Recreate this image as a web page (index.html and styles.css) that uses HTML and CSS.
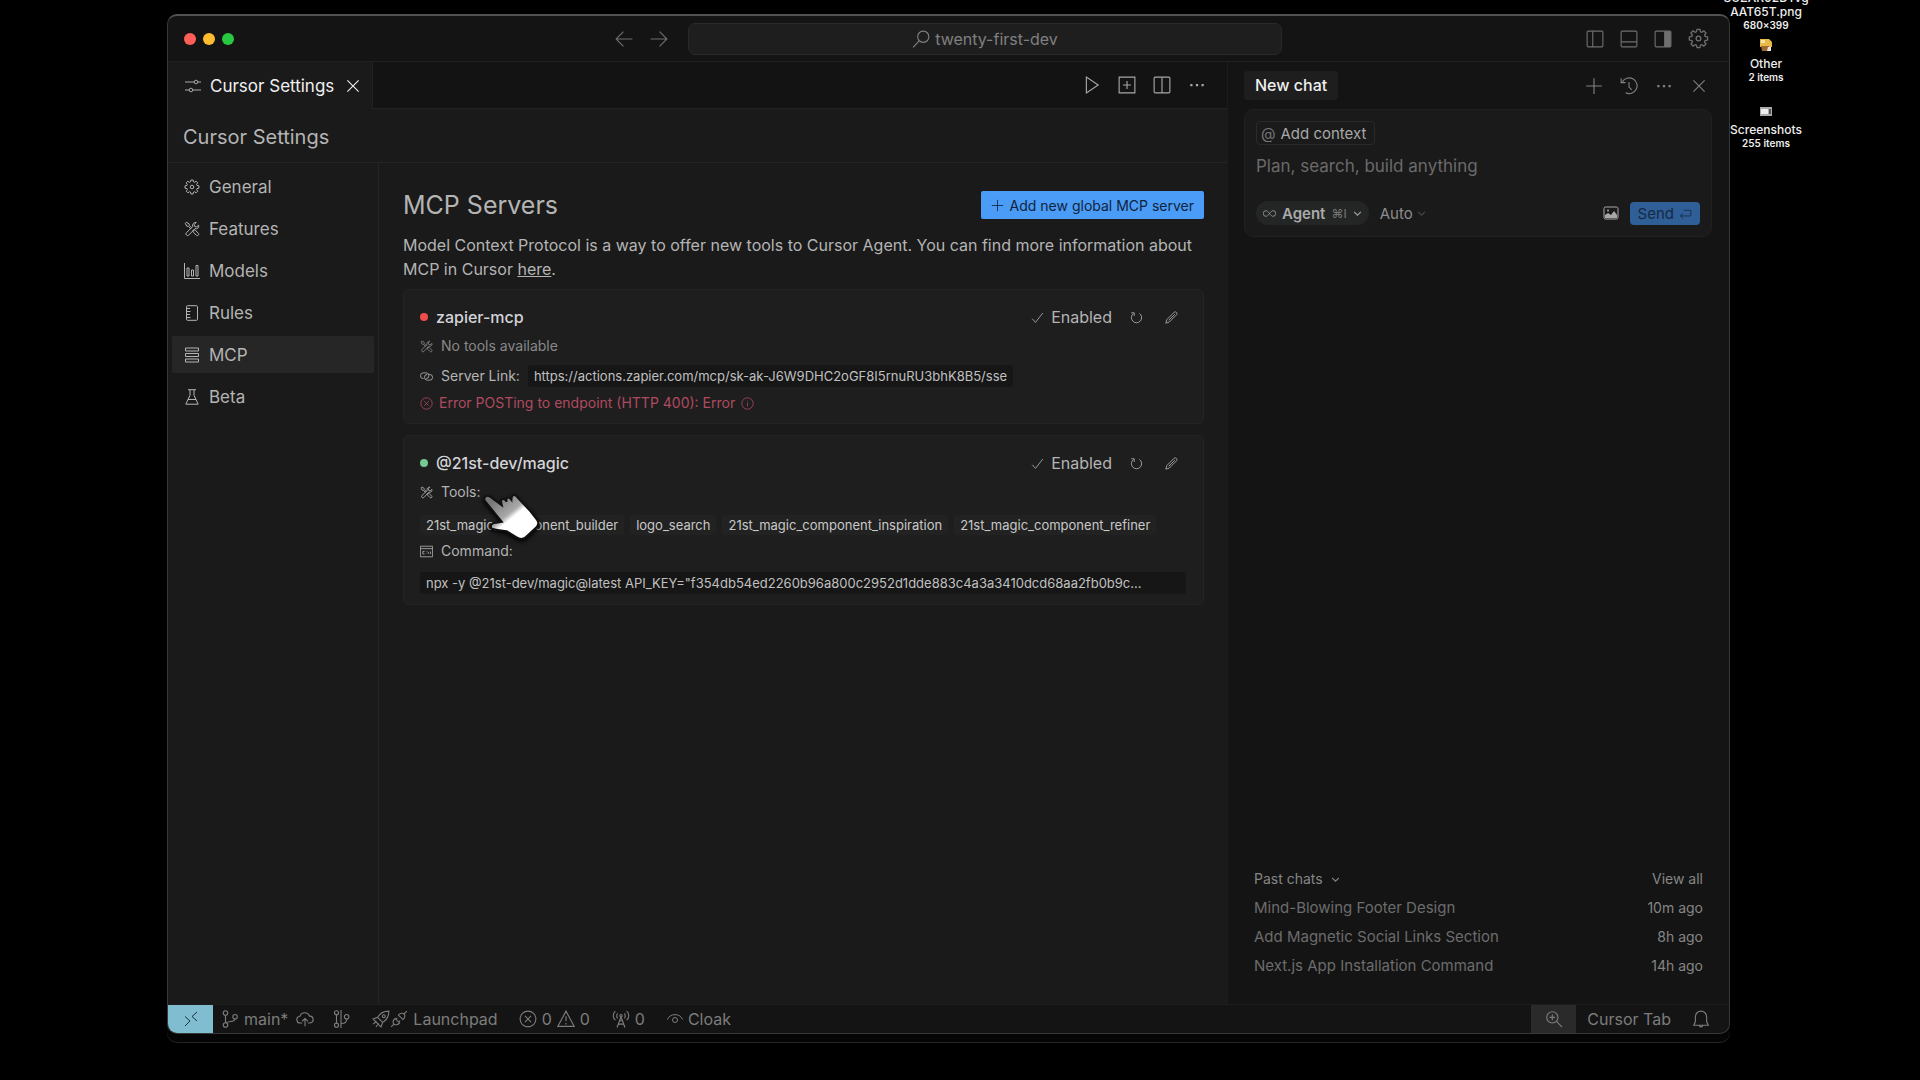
FILE: index.html
```html
<!DOCTYPE html>
<html lang="en">
<head>
    <meta charset="UTF-8">
    <meta name="viewport" content="width=device-width, initial-scale=1.0">
    <title>Cursor Settings - twenty-first-dev</title>
    <link rel="stylesheet" href="styles.css">
</head>
<body>
    <!-- shared icons -->
    <svg class="sprite" aria-hidden="true">
        <symbol id="gear" viewBox="0 0 16 16">
            <path d="M6.9 1h2.2l.4 1.9 1 .4 1.6-1.1 1.6 1.6-1.1 1.6.4 1 1.9.4v2.4l-1.9.4-.4 1 1.1 1.6-1.6 1.6-1.6-1.1-1 .4L9.100 15H6.900l-.4-1.900-1-.4-1.600 1.100-1.600-1.600 1.100-1.600-.4-1L1 9.200V6.800l1.900-.4.4-1-1.100-1.600 1.600-1.600 1.600 1.100 1-.4z"/>
            <circle cx="8" cy="8" r="1.8"/>
        </symbol>
        <symbol id="tools" viewBox="0 0 16 16">
            <path d="M1.300 2.400 2.500 1.200l2.600 1.700.2 1.500 2.300 2.300-1 1-2.300-2.300-1.500-.2zM8.800 9.800l1-1 1.600.5 3 3c1.200 1.200-.8 3.200-2 2l-3-3zM14.700 4.200c.6 2.300-1.600 4.200-3.800 3.500l-6.200 6.500c-1.400 1.400-3.800-.9-2.400-2.400l6.400-6.200C8 3.300 10 1 12.200 1.500l-2 2 .4 1.900 1.900.5z"/>
        </symbol>
        <symbol id="close" viewBox="0 0 16 16"><path d="M3 3l10 10M13 3L3 13"/></symbol>
        <symbol id="plus" viewBox="0 0 16 16"><path d="M8 1v14M1 8h14"/></symbol>
        <symbol id="dots" viewBox="0 0 16 16">
            <path class="solid" d="M2 7h2v2H2zM7 7h2v2H7zM12 7h2v2h-2z"/>
        </symbol>
        <symbol id="check" viewBox="0 0 16 16"><path d="M1.500 9.500 5.500 14 14.500 2.500"/></symbol>
        <symbol id="refresh" viewBox="0 0 16 16">
            <path d="M11.500 2.900a6.300 6.300 0 1 1-7.200.200M1.500 2.200h3.700v3.900"/>
        </symbol>
        <symbol id="pencil" viewBox="0 0 16 16">
            <path d="M1 15l1.200-4.400 9.200-9.200c1.800-1.300 4.300 1 3 3.100l-9.200 9.200zM4.500 11.500l7.500-7.500"/>
        </symbol>
        <symbol id="chevron" viewBox="0 0 16 16"><path d="M2 5l6 6 6-6"/></symbol>
        <symbol id="error" viewBox="0 0 16 16">
            <circle cx="8" cy="8" r="7"/><path d="M5.300 5.300l5.400 5.400M10.700 5.300l-5.400 5.400"/>
        </symbol>
    </svg>

    <div class="window">
        <header class="titlebar">
            <div class="titlebar-left">
                <div class="lights">
                    <span class="light red"></span>
                    <span class="light yellow"></span>
                    <span class="light green"></span>
                </div>
                <div class="history">
                    <button type="button" aria-label="Go back"><svg class="icon" viewBox="0 0 16 16"><path d="M15.500 8H1M7.500 1.500 1 8l6.500 6.500"/></svg></button>
                    <button type="button" aria-label="Go forward"><svg class="icon" viewBox="0 0 16 16"><path d="M.5 8H15M8.500 1.500 15 8l-6.500 6.500"/></svg></button>
                </div>
            </div>
            <button type="button" class="command-center">
                <svg class="icon" viewBox="0 0 16 16"><circle cx="10" cy="6" r="5"/><path d="M6.500 9.500 1 15.500"/></svg>
                twenty-first-dev
            </button>
            <div class="titlebar-right">
                <button type="button" aria-label="Toggle side bar"><svg class="icon" viewBox="0 0 16 16"><rect x="1" y="1" width="14" height="14" rx="1"/><path d="M6 1v14"/></svg></button>
                <button type="button" aria-label="Toggle panel"><svg class="icon" viewBox="0 0 16 16"><rect x="1" y="1" width="14" height="14" rx="1"/><path d="M1 10.500h14"/></svg></button>
                <button type="button" aria-label="Toggle chat"><svg class="icon" viewBox="0 0 16 16"><rect x="1" y="1" width="14" height="14" rx="1"/><path class="solid" d="M9 1h6v14H9z"/></svg></button>
                <button type="button" aria-label="Settings"><svg class="icon large"><use href="#gear"/></svg></button>
            </div>
        </header>

        <div class="workbench">
            <main class="editor">
                <div class="tabs">
                    <div class="tab">
                        <svg class="icon small" viewBox="0 0 16 16"><path d="M0 4h9M13 4h3M0 12h4M8 12h8"/><circle cx="11" cy="4" r="1.800"/><circle cx="6" cy="12" r="1.800"/></svg>
                        <span>Cursor Settings</span>
                        <button type="button" aria-label="Close tab"><svg class="icon"><use href="#close"/></svg></button>
                    </div>
                    <div class="tab-actions">
                        <button type="button" aria-label="Run"><svg class="icon" viewBox="0 0 16 16"><path d="M3 1v14l10.500-7z"/></svg></button>
                        <button type="button" aria-label="New file"><svg class="icon" viewBox="0 0 16 16"><path d="M1 1h14v14H1zM8 4.500v7M4.500 8h7"/></svg></button>
                        <button type="button" aria-label="Split editor"><svg class="icon" viewBox="0 0 16 16"><rect x="1" y="1" width="14" height="14" rx="1"/><path d="M8 1v14"/></svg></button>
                        <button type="button" aria-label="More"><svg class="icon"><use href="#dots"/></svg></button>
                    </div>
                </div>

                <h1 class="page-title">Cursor Settings</h1>

                <div class="settings">
                    <nav class="sidebar">
                        <a href="#general"><svg class="icon small"><use href="#gear"/></svg>General</a>
                        <a href="#features"><svg class="icon small"><use href="#tools"/></svg>Features</a>
                        <a href="#models"><svg class="icon small" viewBox="0 0 16 16"><path d="M.500 0v15.500H16M3 5h2v8H3zM7.500 7h2v6h-2zM12 2.500h2V13h-2z"/></svg>Models</a>
                        <a href="#rules"><svg class="icon small" viewBox="0 0 16 16"><rect x="2.500" y=".7" width="11" height="14.600" rx="1"/><path d="M2.500 3.500H6M2.500 6.500h4M2.500 9.500H6M2.500 12.500h4"/></svg>Rules</a>
                        <a href="#mcp" class="active"><svg class="icon small" viewBox="0 0 16 16"><path d="M1.500 1h13v3h-13zM1.500 6.500h13v3h-13zM1.500 12h13v3h-13z"/></svg>MCP</a>
                        <a href="#beta"><svg class="icon small" viewBox="0 0 16 16"><path d="M4 .7h8M6 .7v5.600L1.800 15.200h12.400L10 6.300V.7M4 10.500h8"/></svg>Beta</a>
                    </nav>

                    <section class="content">
                        <div class="content-head">
                            <h2>MCP Servers</h2>
                            <button type="button" class="add-btn"><svg class="icon tiny"><use href="#plus"/></svg>Add new global MCP server</button>
                        </div>
                        <p class="intro">Model Context Protocol is a way to offer new tools to Cursor Agent. You can find more information about MCP in Cursor <a href="#docs">here</a>.</p>

                        <article class="card">
                            <div class="card-head">
                                <span class="dot off"></span>
                                <h3>zapier-mcp</h3>
                                <div class="card-actions">
                                    <button type="button"><svg class="icon tiny"><use href="#check"/></svg>Enabled</button>
                                    <button type="button" aria-label="Refresh"><svg class="icon tiny"><use href="#refresh"/></svg></button>
                                    <button type="button" aria-label="Edit"><svg class="icon tiny"><use href="#pencil"/></svg></button>
                                </div>
                            </div>
                            <div class="row muted"><svg class="icon tiny"><use href="#tools"/></svg>No tools available</div>
                            <div class="row link-row">
                                <svg class="icon tiny" viewBox="0 0 16 16"><path d="M4.500 10.500H4a3.500 3.500 0 0 1 0-7h3.500a3.500 3.500 0 0 1 0 7M11 5.500h1a3.500 3.500 0 0 1 0 7H9a3.500 3.500 0 0 1 0-7"/></svg>
                                Server Link:
                                <code>https://actions.zapier.com/mcp/sk-ak-J6W9DHC2oGF8I5rnuRU3bhK8B5/sse</code>
                            </div>
                            <div class="row error-row">
                                <svg class="icon tiny"><use href="#error"/></svg>
                                Error POSTing to endpoint (HTTP 400): Error
                                <svg class="icon tiny" viewBox="0 0 16 16"><circle cx="8" cy="8" r="7"/><path d="M8 7v4.500M8 4.500v1"/></svg>
                            </div>
                        </article>

                        <article class="card">
                            <div class="card-head">
                                <span class="dot on"></span>
                                <h3>@21st-dev/magic</h3>
                                <div class="card-actions">
                                    <button type="button"><svg class="icon tiny"><use href="#check"/></svg>Enabled</button>
                                    <button type="button" aria-label="Refresh"><svg class="icon tiny"><use href="#refresh"/></svg></button>
                                    <button type="button" aria-label="Edit"><svg class="icon tiny"><use href="#pencil"/></svg></button>
                                </div>
                            </div>
                            <div class="row"><svg class="icon tiny"><use href="#tools"/></svg>Tools:</div>
                            <div class="tags">
                                <span>21st_magic_component_builder</span>
                                <span>logo_search</span>
                                <span>21st_magic_component_inspiration</span>
                                <span>21st_magic_component_refiner</span>
                            </div>
                            <div class="row"><svg class="icon tiny" viewBox="0 0 16 16"><path d="M.5 1.500h15v13H.5zM.5 4.500h15M5.500 8H3.500v3h2M7.500 8v.5M7.500 10.500v.5M9.500 8l1.500 3M13 8v3"/></svg>Command:</div>
                            <code class="command">npx -y @21st-dev/magic@latest API_KEY="f354db54ed2260b96a800c2952d1dde883c4a3a3410dcd68aa2fb0b9c...</code>

                            <svg class="pointer" viewBox="0 0 60 52" aria-hidden="true">
                                <defs>
                                    <linearGradient id="hand" x1="0" y1="0" x2="1" y2="1">
                                        <stop offset="0.150" stop-color="#777"/>
                                        <stop offset="0.440" stop-color="#aaa"/>
                                        <stop offset="0.520" stop-color="#fff"/>
                                    </linearGradient>
                                </defs>
                                <path d="M3 9c-2-4 2-7 6-4l12 9-1-5c1-3 4-2 6 1-1-5 2-6 5-2 0-5 3-7 6-3l14 15 7 9c2 3 1 6-1 8L45 48c-3 2-6 1-9-1l-10-6c-6-1-13-1-16-3-2-3 1-6 5-6l6-1z"/>
                            </svg>
                        </article>
                    </section>
                </div>
            </main>

            <aside class="chat">
                <div class="chat-head">
                    <span class="chat-tab">New chat</span>
                    <div class="chat-actions">
                        <button type="button" aria-label="New chat"><svg class="icon"><use href="#plus"/></svg></button>
                        <button type="button" aria-label="Chat history"><svg class="icon" viewBox="0 0 16 16"><path d="M2 4.500A7 7 0 1 1 5 14M1 1v4h4M8 4.500V9l2.500 2.500"/></svg></button>
                        <button type="button" aria-label="More"><svg class="icon"><use href="#dots"/></svg></button>
                        <button type="button" aria-label="Close chat"><svg class="icon"><use href="#close"/></svg></button>
                    </div>
                </div>

                <form class="composer">
                    <button type="button" class="context-btn"><span class="at">@</span>Add context</button>
                    <input type="text" placeholder="Plan, search, build anything" aria-label="Message">
                    <div class="composer-foot">
                        <button type="button" class="agent-btn">
                            <svg class="icon tiny" viewBox="0 0 16 16"><path d="M8 8C6 5.500 5 4.500 3.800 4.500a3.500 3.500 0 0 0 0 7C5 11.500 6 10.500 8 8s3-3.500 4.200-3.500a3.500 3.500 0 0 1 0 7C11 11.500 10 10.500 8 8z"/></svg>
                            <strong>Agent</strong>
                            <small>⌘I</small>
                            <svg class="icon mini"><use href="#chevron"/></svg>
                        </button>
                        <button type="button" class="auto-btn">Auto <svg class="icon mini dim"><use href="#chevron"/></svg></button>
                        <button type="button" class="image-btn" aria-label="Attach image"><svg class="icon small" viewBox="0 0 16 16"><rect x="1" y="2" width="14" height="12" rx="1.500"/><path class="solid" d="M2 13v-3l3-2 3 2 3-4 3 4v3z"/><circle class="solid" cx="5" cy="5.500" r="1"/></svg></button>
                        <button type="submit" class="send-btn">Send<svg class="icon tiny" viewBox="0 0 16 16"><path d="M6 4h8.500v7H2M5 8l-3.500 3L5 14"/></svg></button>
                    </div>
                </form>

                <div class="past">
                    <div class="past-head">
                        <button type="button">Past chats <svg class="icon mini"><use href="#chevron"/></svg></button>
                        <a href="#all">View all</a>
                    </div>
                    <a href="#chat1"><span>Mind-Blowing Footer Design</span><time>10m ago</time></a>
                    <a href="#chat2"><span>Add Magnetic Social Links Section</span><time>8h ago</time></a>
                    <a href="#chat3"><span>Next.js App Installation Command</span><time>14h ago</time></a>
                </div>
            </aside>
        </div>

        <footer class="statusbar">
            <button type="button" class="remote" aria-label="Open remote window"><svg class="icon small" viewBox="0 0 16 16"><path d="M2 5.500l5 4.500-5 5M14 1 9 5.500l5 4.500"/></svg></button>
            <button type="button" class="branch">
                <svg class="icon" viewBox="0 0 16 16"><circle cx="4" cy="2.700" r="2"/><circle cx="4" cy="13.300" r="2"/><circle cx="12.500" cy="6" r="2"/><path d="M4 4.700v6.600M12.500 8c0 3-6 1.500-8.300 3.500"/></svg>
                main*
                <svg class="icon" viewBox="0 0 16 16"><path d="M5.500 11.500H4A3 3 0 0 1 3.500 5.500 4.500 4.500 0 0 1 12 5.500a3 3 0 0 1 .5 6H10.500M8 14.500v-7M5.500 10 8 7.500l2.500 2.500"/></svg>
            </button>
            <button type="button" class="graph" aria-label="Git graph"><svg class="icon" viewBox="0 0 16 16"><path d="M4 4v8M8 0v16M8 12c4 0 5-1 5-4"/><circle cx="4" cy="2.500" r="1.800"/><circle cx="4" cy="13.500" r="1.800"/><circle cx="13" cy="6" r="2"/></svg></button>
            <button type="button" class="launchpad">
                <svg class="icon" viewBox="0 0 16 16"><path d="M15 1c-5 0-8 2-10 5.500L1 8l7 7 1.500-4C13 9 15 6 15 1zM5 6.500 9.500 11M1 12.500 4 10M3.500 15 6 12"/><circle cx="10.500" cy="5.500" r="1.300"/></svg>
                <svg class="icon" viewBox="0 0 16 16"><path d="M1 15l2.500-2.500M15 1l-2.500 2.500M6.500 7 5.200 8.300M9 9.500l-1.300 1.300M4.500 7.500l4 4c-1.500 2-3.800 2-5 1s-1-3.500 1-5zM7.500 4.500l4 4c2-1.500 2-4 1-5s-3.500-1-5 1z"/></svg>
                Launchpad
            </button>
            <button type="button" class="problems">
                <svg class="icon"><use href="#error"/></svg>0
                <svg class="icon" viewBox="0 0 16 16"><path d="M8 1 .8 14.500h14.400zM8 5.500V10M8 11.500v1.300"/></svg>0
            </button>
            <button type="button" class="ports">
                <svg class="icon" viewBox="0 0 16 16"><path d="M8 6 4.500 15.500M8 6l3.500 9.500M5.500 12.500h5M6.500 9.500h3M3 1C.5 3 .5 7 3 9M5 3C4 4 4 6.500 5 7.500M13 1c2.500 2 2.500 6 0 8M11 3c1 1 1 3.500 0 4.500"/><circle cx="8" cy="5" r="1"/></svg>0
            </button>
            <button type="button" class="cloak">
                <svg class="icon small" viewBox="0 0 16 16"><path d="M.500 8.500c2-6.500 13-6.500 15 0"/><circle cx="8" cy="9" r="2.500"/></svg>Cloak
            </button>
            <button type="button" class="zoom" aria-label="Zoom"><svg class="icon" viewBox="0 0 16 16"><circle cx="6.500" cy="6.500" r="5"/><path d="M10.200 10.200l5 5M6.500 4v5M4 6.500h5"/></svg></button>
            <button type="button" class="cursor-tab">Cursor Tab</button>
            <button type="button" class="bell" aria-label="Notifications"><svg class="icon" viewBox="0 0 16 16"><path d="M1.500 13.500h13L13 10.500V6A5 5 0 0 0 3 6v4.500zM6.500 13.500a1.500 1.500 0 0 0 3 0"/></svg></button>
        </footer>
    </div>

    <aside class="desktop">
        <div class="file first">SUZAR02DTvg<br>AAT65T.png<small>680×399</small></div>
        <div class="file">
            <svg class="thumb" viewBox="0 0 14 14"><path fill="#e9b94a" d="M1 1h9l3 3v5H1z"/><path fill="#f7e3a8" d="M2 2h4v3H2z"/><path fill="#a06a2c" d="M2 8h8v5H3z"/><path fill="#e8e4dc" d="M9 9h3v4H8z"/></svg>
            Other<small>2 items</small>
        </div>
        <div class="file">
            <svg class="thumb" viewBox="0 0 14 14"><path fill="#aaa" d="M1 3h12v9H1z"/><path fill="#eee" d="M2 5h7v5H2z"/><path fill="#555" d="M10 5h2v5h-2z"/></svg>
            Screenshots<small>255 items</small>
        </div>
    </aside>
</body>
</html>
```
FILE: styles.css
```css
* {
    box-sizing: border-box;
}

body {
    margin: 0;
    padding: 14px 119px 46px 167px;
    height: 100vh;
    display: flex;
    background-color: #000;
    color: #b4b4b4;
    font-family: Inter, "Open Sans", sans-serif;
    font-size: 16px;
    overflow: hidden;
}

h1, h2, h3, p {
    margin: 0;
    font-weight: normal;
}

button {
    display: flex;
    align-items: center;
    padding: 0;
    border: none;
    background: none;
    color: inherit;
    font: inherit;
    white-space: nowrap;
}

a {
    color: inherit;
    text-decoration: none;
}

.sprite {
    position: absolute;
    width: 0;
    height: 0;
}

.icon {
    width: 18px;
    height: 18px;
    flex: none;
    fill: none;
    stroke: currentColor;
    stroke-width: 1;
}

.solid {
    fill: currentColor;
    stroke: none;
}

.large { width: 21px; height: 21px; }
.small { width: 16px; height: 16px; }
.tiny { width: 13px; height: 13px; }
.mini { width: 9px; height: 9px; stroke-width: 2; }
.dim { opacity: 0.4; }

/* window */
.window {
    flex: 1;
    min-width: 0;
    display: flex;
    flex-direction: column;
    border: 1px solid #383838;
    border-top: 2px solid #525252;
    border-radius: 10px;
    background-color: #141414;
    box-shadow: 0 8px 0 #050505, 0 9px 0 #242426;
    overflow: hidden;
}

.titlebar {
    height: 46px;
    display: flex;
    align-items: center;
    border-bottom: 1px solid #202020;
    color: #6f6f6f;
}

.titlebar-left {
    flex: 17;
    display: flex;
    justify-content: space-between;
    padding: 0 20px 0 16px;
}

.lights {
    display: flex;
    align-items: center;
    gap: 7px;
}

.light {
    width: 12px;
    height: 12px;
    border-radius: 50%;
}

.red { background-color: #ff5f57; }
.yellow { background-color: #febc2e; }
.green { background-color: #28c840; }

.history {
    display: flex;
    gap: 17px;
}

.command-center {
    width: 38%;
    height: 32px;
    justify-content: center;
    gap: 5px;
    border: 1px solid #292929;
    border-radius: 7px;
    background-color: #1e1e1e;
    color: #808080;
}

.titlebar-right {
    flex: 15;
    display: flex;
    align-items: center;
    justify-content: flex-end;
    gap: 16px;
    padding-right: 20px;
}

.workbench {
    flex: 1;
    min-height: 0;
    display: flex;
}

/* editor */
.editor {
    flex: 1;
    min-width: 0;
    display: flex;
    flex-direction: column;
    background-color: #1a1a1a;
    border-right: 1px solid #1c1c1c;
}

.tabs {
    height: 47px;
    display: flex;
}

.tab {
    display: flex;
    align-items: center;
    padding: 0 10px 0 17px;
    border-right: 1px solid #222;
    color: #f0f0f0;
    font-size: 17px;
}

.tab span {
    margin: 0 10px 0 9px;
}

.tab .small {
    color: #aaa;
}

.tab-actions {
    flex: 1;
    display: flex;
    align-items: center;
    justify-content: flex-end;
    gap: 17px;
    padding-right: 21px;
    border-bottom: 1px solid #222;
    background-color: #131313;
    color: #a8a8a8;
}

.page-title {
    padding: 16px 15px 12px;
    border-bottom: 1px solid #242424;
    font-size: 20px;
    line-height: 25px;
}

.settings {
    flex: 1;
    display: flex;
}

.sidebar {
    width: 211px;
    display: flex;
    flex-direction: column;
    gap: 5px;
    padding: 5px 4px;
    border-right: 1px solid #242424;
    font-size: 17px;
}

.sidebar a {
    height: 37px;
    display: flex;
    align-items: center;
    gap: 9px;
    padding-left: 12px;
    border-radius: 2px;
}

.sidebar a.active {
    background-color: #262626;
}

.content {
    flex: 1;
    min-width: 0;
    padding: 25px 23px 0 24px;
}

.content-head {
    display: flex;
    align-items: center;
    justify-content: space-between;
}

.content-head h2 {
    font-size: 25px;
    line-height: 34px;
}

.add-btn {
    height: 28px;
    gap: 6px;
    padding: 0 10px;
    border-radius: 2px;
    background-color: #4a9cf6;
    color: #10233c;
    font-size: 14px;
}

.intro {
    margin: 11px 0 8px;
    line-height: 24px;
}

.intro a {
    text-decoration: underline;
}

.card {
    position: relative;
    margin-bottom: 11px;
    padding: 15px 17px 10px 16px;
    border: 1px solid #242424;
    border-radius: 6px;
    background-color: #1e1e1e;
    font-size: 13px;
}

.card-head {
    display: flex;
    align-items: center;
    margin-bottom: 7px;
    font-size: 16px;
    line-height: 24px;
}

.card-head h3 {
    flex: 1;
    color: #d4d4d8;
    font-size: 16px;
    font-weight: 500;
}

.dot {
    width: 8px;
    height: 8px;
    margin-right: 8px;
    border-radius: 50%;
}

.dot.off { background-color: #f14c4c; }
.dot.on { background-color: #73c991; }

.card-actions {
    display: flex;
    gap: 18px;
    padding-right: 8px;
}

.card-actions button {
    gap: 7px;
}

.card-actions button:last-child {
    margin-left: 4px;
}

.row {
    display: flex;
    align-items: center;
    gap: 8px;
    font-size: 14px;
    line-height: 20px;
}

.muted {
    color: #888;
}

.link-row {
    margin: 9px 0 6px;
}

.card code {
    padding: 0 6px;
    border-radius: 3px;
    background-color: #161616;
    color: #c0c0c0;
    font-family: inherit;
    font-size: 13px;
    line-height: 22px;
}

.error-row {
    gap: 6px;
    color: #b04a60;
}

.tags {
    display: flex;
    gap: 6px;
    margin: 13px 0 6px;
}

.tags span {
    padding: 0 6px;
    border-radius: 3px;
    background-color: #222;
    color: #c8c8c8;
    line-height: 20px;
}

.card .command {
    display: block;
    margin-top: 11px;
    overflow: hidden;
    white-space: nowrap;
    text-overflow: ellipsis;
}

/* the hand lies over the tools list */
.pointer {
    position: absolute;
    left: 78px;
    top: 56px;
    width: 57px;
    height: 50px;
    fill: url(#hand);
    stroke: #111;
    stroke-width: 2;
    filter: drop-shadow(0 2px 2px #000);
}

/* chat */
.chat {
    width: 501px;
    display: flex;
    flex-direction: column;
    padding: 0 17px 26px 16px;
}

.chat-head {
    height: 47px;
    display: flex;
    align-items: center;
    justify-content: space-between;
}

.chat-tab {
    padding: 0 11px;
    border-radius: 4px;
    background-color: #1e1e1e;
    color: #eee;
    font-weight: 500;
    line-height: 29px;
}

.chat-actions {
    display: flex;
    gap: 17px;
    padding-right: 4px;
    color: #808080;
}

.composer {
    display: flex;
    flex-direction: column;
    align-items: flex-start;
    gap: 8px;
    padding: 11px;
    border: 1px solid #202020;
    border-radius: 9px;
    background-color: #1a1a1a;
}

.context-btn {
    height: 24px;
    gap: 5px;
    padding: 0 8px 0 4px;
    border: 1px solid #2a2a2a;
    border-radius: 4px;
    color: #a8a8a8;
    font-size: 15px;
}

.at {
    color: #777;
}

.composer input {
    width: 100%;
    height: 26px;
    padding: 0;
    border: none;
    outline: none;
    background: none;
    color: #ccc;
    font: inherit;
    font-size: 17px;
}

.composer input::placeholder {
    color: #6a6a6a;
}

.composer-foot {
    width: 100%;
    display: flex;
    align-items: center;
    margin-top: 14px;
    font-size: 15px;
}

.agent-btn {
    height: 24px;
    gap: 6px;
    padding: 0 7px;
    border-radius: 12px;
    background-color: #232625;
    color: #a0a0a0;
}

.agent-btn strong {
    font-weight: 600;
    color: #aaa;
}

.agent-btn small {
    font-size: 12px;
    color: #777;
}

.auto-btn {
    gap: 4px;
    margin-left: 11px;
    color: #8c8c8c;
}

.image-btn {
    margin: 0 11px 0 auto;
    color: #a8a8a8;
}

.send-btn {
    height: 23px;
    gap: 5px;
    padding: 0 8px;
    border-radius: 4px;
    background-color: #2f5f96;
    color: #152a45;
}

.past {
    display: flex;
    flex-direction: column;
    gap: 5px;
    margin-top: auto;
    padding: 0 9px 0 10px;
    font-size: 15px;
    line-height: 24px;
    color: #6c6c6c;
}

.past > a, .past-head {
    display: flex;
    justify-content: space-between;
}

.past-head, .past time {
    color: #858585;
    font-size: 14px;
}

.past-head button {
    gap: 8px;
}

/* status bar */
.statusbar {
    height: 29px;
    display: flex;
    align-items: stretch;
    border-top: 1px solid #1e1e1e;
    color: #7c7c7c;
}

.statusbar button {
    gap: 5px;
}

.statusbar .remote {
    width: 45px;
    justify-content: center;
    margin-right: 8px;
    background-color: #80bdd0;
    color: #17333c;
}

.statusbar .branch { gap: 8px; }
.branch .icon:first-child { margin-right: -3px; }
.graph { margin-left: 18px; }
.launchpad { margin-left: 22px; }
.launchpad .icon + .icon { margin-left: -5px; }
.problems { margin-left: 21px; }
.ports { margin-left: 22px; }
.cloak { margin-left: 22px; }

.statusbar .zoom {
    width: 45px;
    justify-content: center;
    margin-left: auto;
    background-color: #2a2a2a;
}

.cursor-tab { margin-left: 11px; }
.bell { margin: 0 19px 0 21px; }

/* desktop icons */
.desktop {
    width: 70px;
    display: flex;
    flex-direction: column;
    align-items: center;
    gap: 20px;
    margin: -23px 0 0 1px;
    color: #eee;
}

.file {
    display: flex;
    flex-direction: column;
    align-items: center;
    font-size: 12px;
    font-weight: 500;
    line-height: 14px;
    text-align: center;
}

.file small {
    font-size: 10px;
    font-weight: 600;
    line-height: 13px;
}

.file.first {
    margin-bottom: -14px;
}

.thumb {
    width: 14px;
    height: 14px;
    margin-bottom: 5px;
}
```
